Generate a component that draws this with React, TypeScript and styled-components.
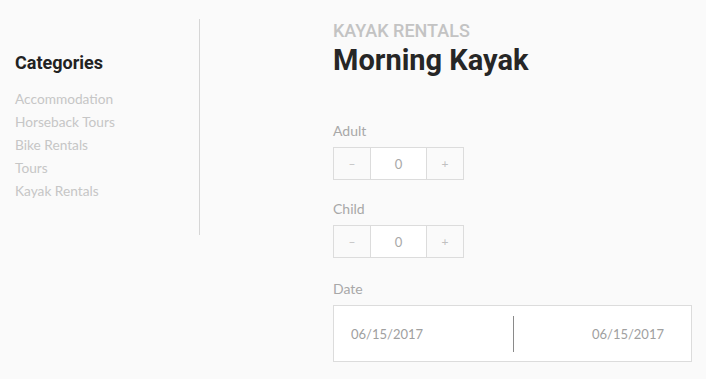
import React from "react";
import styled, { createGlobalStyle } from "styled-components";

const Global = createGlobalStyle`
  html, body { margin: 0; padding: 0; background: #fafafa; }
  body { font-family: Lato, "Open Sans", sans-serif; }
`;

const Page = styled.div`
  display: flex;
  align-items: flex-start;
  width: 706px;
  height: 379px;
  overflow: hidden;
  background: #fafafa;
`;

const Sidebar = styled.aside`
  width: 184px;
  height: 216px;
  margin-top: 19px;
  padding-left: 15px;
  border-right: 1px solid #d6d6d6;
  box-sizing: content-box;
`;

const SideTitle = styled.h3`
  margin: 33px 0 13px;
  font-family: Roboto, sans-serif;
  font-weight: 700;
  font-size: 18px;
  line-height: 22px;
  color: #222;
`;

const CatList = styled.ul`
  list-style: none;
  margin: 0;
  padding: 0;
`;

const CatItem = styled.li`
  font-size: 13.7px;
  line-height: 23px;
  color: #c6c6c6;
`;

const Main = styled.main`
  margin-left: 133px;
  width: 359px;
  padding-top: 20px;
`;

const Kicker = styled.div`
  font-family: Roboto, sans-serif;
  font-weight: 500;
  font-size: 18px;
  line-height: 22px;
  color: #c3c3c3;
`;

const Title = styled.h1`
  margin: 0;
  font-family: Roboto, sans-serif;
  font-weight: 700;
  font-size: 29px;
  line-height: 36px;
  color: #262626;
`;

const Label = styled.div<{ $top: number }>`
  margin-top: ${(p) => p.$top}px;
  margin-bottom: 9px;
  font-size: 14px;
  line-height: 14px;
  color: #a8a8a8;
`;

const Stepper = styled.div`
  display: flex;
  width: 131px;
  height: 33px;
  border: 1px solid #dcdcdc;
  box-sizing: border-box;
`;

const StepBtn = styled.div`
  width: 36px;
  display: flex;
  align-items: center;
  justify-content: center;
  font-size: 12px;
  color: #c0c0c0;
`;

const StepValue = styled.div`
  flex: 1;
  display: flex;
  align-items: center;
  justify-content: center;
  background: #fff;
  border-left: 1px solid #dcdcdc;
  border-right: 1px solid #dcdcdc;
  font-size: 13px;
  color: #a8a8a8;
`;

const DateBox = styled.div`
  display: flex;
  align-items: center;
  height: 57px;
  border: 1px solid #dcdcdc;
  background: #fff;
  box-sizing: border-box;
`;

const DateText = styled.div<{ $right?: boolean }>`
  flex: ${(p) => (p.$right ? "1" : "0 0 162px")};
  text-align: ${(p) => (p.$right ? "right" : "left")};
  padding: ${(p) => (p.$right ? "0 27px 0 0" : "0 0 0 17px")};
  font-size: 13px;
  color: #a0a0a0;
`;

const DateDivider = styled.div`
  width: 1px;
  height: 36px;
  background: #8a8a8a;
`;

const categories = ["Accommodation", "Horseback Tours", "Bike Rentals", "Tours", "Kayak Rentals"];

function Counter() {
  return (
    <Stepper>
      <StepBtn>–</StepBtn>
      <StepValue>0</StepValue>
      <StepBtn>+</StepBtn>
    </Stepper>
  );
}

export default function App() {
  return (
    <>
      <Global />
      <Page>
        <Sidebar>
          <SideTitle>Categories</SideTitle>
          <CatList>
            {categories.map((c) => (
              <CatItem key={c}>{c}</CatItem>
            ))}
          </CatList>
        </Sidebar>
        <Main>
          <Kicker>KAYAK RENTALS</Kicker>
          <Title>Morning Kayak</Title>
          <Label $top={46}>Adult</Label>
          <Counter />
          <Label $top={22}>Child</Label>
          <Counter />
          <Label $top={24}>Date</Label>
          <DateBox>
            <DateText>06/15/2017</DateText>
            <DateDivider />
            <DateText $right>06/15/2017</DateText>
          </DateBox>
        </Main>
      </Page>
    </>
  );
}
